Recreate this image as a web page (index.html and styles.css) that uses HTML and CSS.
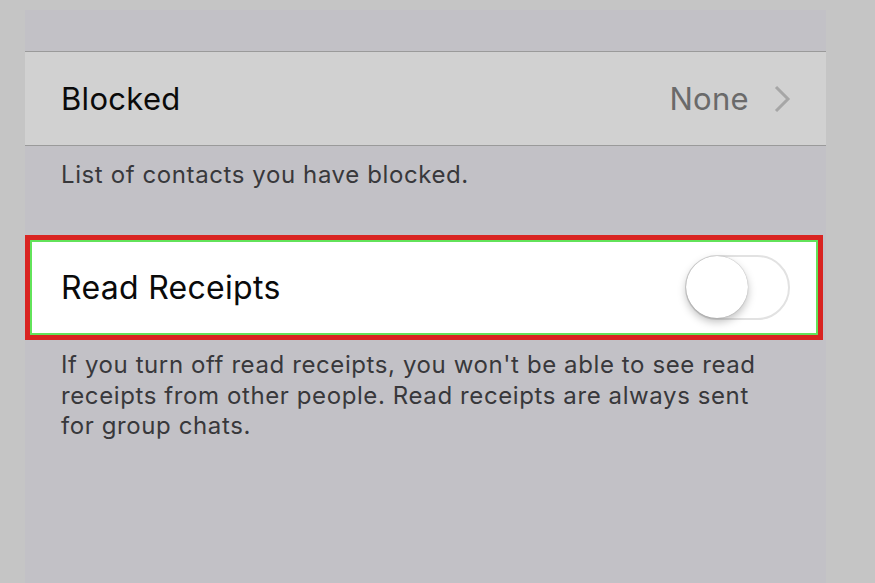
FILE: index.html
```html
<!DOCTYPE html>
<html lang="en">
<head>
    <meta charset="UTF-8">
    <meta name="viewport" content="width=device-width, initial-scale=1.0">
    <title>Privacy</title>
    <link rel="stylesheet" href="styles.css">
</head>
<body>
    <div id="settings">
        <div class="spacer"></div>
        <div class="row blocked-row">
            <span class="row-title">Blocked</span>
            <span class="row-value">
                None
                <svg class="chevron" width="18" height="28" viewBox="0 0 18 28">
                    <path d="M3 2 L15 14 L3 26" fill="none" stroke="#a6a6a6" stroke-width="3"/>
                </svg>
            </span>
        </div>
        <p class="footer-note first-note">List of contacts you have blocked.</p>
        <div class="row receipts-row">
            <span class="row-title">Read Receipts</span>
            <div class="toggle">
                <div class="knob"></div>
            </div>
        </div>
        <p class="footer-note last-note">If you turn off read receipts, you won't be able to see read receipts from other people. Read receipts are always sent for group chats.</p>
    </div>
</body>
</html>
```

FILE: styles.css
```css
body {
    font-family: Inter, "Liberation Sans", sans-serif;
    background: #c5c5c5;
    margin: 0;
    padding: 10px 0 0 0;
}

#settings {
    width: 801px;
    margin-left: 25px;
    height: 573px;
    background: #c2c1c6;
}

.spacer {
    height: 41px;
}

.row {
    display: flex;
    align-items: center;
    justify-content: space-between;
    box-sizing: border-box;
}

.row-title {
    font-size: 31px;
    color: #0a0a0a;
    letter-spacing: 0.3px;
}

.receipts-row .row-title {
    font-size: 32px;
}

.blocked-row {
    height: 95px;
    background: #d1d1d1;
    border-top: 1px solid #9a9a9a;
    border-bottom: 1px solid #9a9a9a;
    padding: 0 35px 0 36px;
}

.row-value {
    display: flex;
    align-items: center;
    gap: 24px;
    font-size: 31px;
    color: #6a6a6a;
    letter-spacing: 0.3px;
}

.footer-note {
    margin: 0;
    padding: 10px 36px 0 36px;
    font-size: 24px;
    line-height: 30.5px;
    color: #38383b;
    letter-spacing: 0.6px;
}

.first-note {
    padding-top: 14px;
    height: 89px;
    box-sizing: border-box;
}

.last-note {
    padding-right: 56px;
}

.receipts-row {
    height: 105px;
    background: #fff;
    border: 5px solid #d92421;
    box-shadow: inset 0 0 0 2px #62e35a;
    padding: 0 28px 0 31px;
    width: 798px;
}

.toggle {
    position: relative;
    width: 105px;
    height: 65px;
    box-sizing: border-box;
    border: 2px solid #e2e2e2;
    border-radius: 33px;
}

.knob {
    position: absolute;
    top: -1px;
    left: -1px;
    width: 62px;
    height: 62px;
    border-radius: 50%;
    background: #fff;
    box-shadow: 0 4px 8px rgba(0, 0, 0, 0.25), 0 0 1px rgba(0, 0, 0, 0.4);
}
```
